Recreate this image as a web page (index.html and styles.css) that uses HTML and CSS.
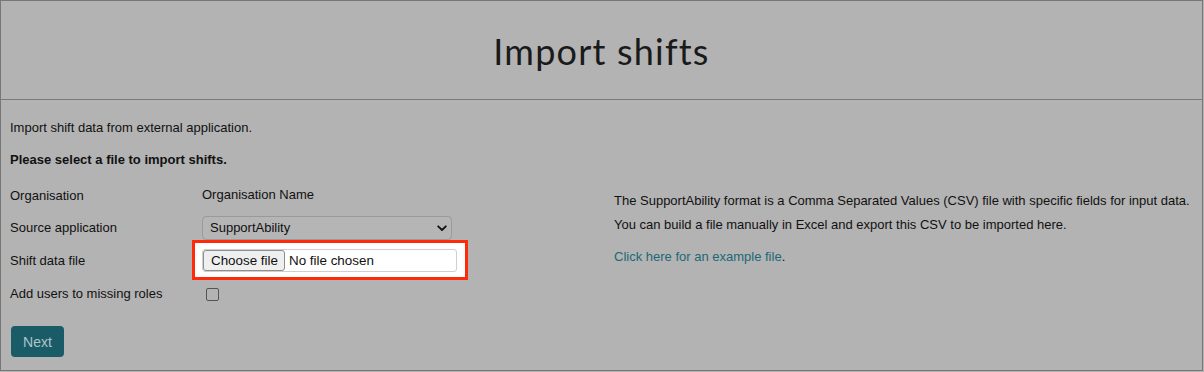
FILE: index.html
```html
<!DOCTYPE html>
<html>
<head>
<meta charset="utf-8">
<link rel="stylesheet" href="styles.css">
</head>
<body>
<div class="page">
  <header class="header"><h1 class="title">Import shifts</h1></header>
  <main class="content">
    <p class="intro">Import shift data from external application.</p>
    <p class="lead">Please select a file to import shifts.</p>
    <div class="columns">
      <div class="form">
        <div class="row">
          <span class="label">Organisation</span>
          <span class="value org">Organisation Name</span>
        </div>
        <div class="row">
          <span class="label">Source application</span>
          <div class="select">
            <span>SupportAbility</span>
            <svg class="chev" width="10" height="7" viewBox="0 0 10 7"><path d="M1.2 1.3 L5 5 L8.8 1.3" fill="none" stroke="#111" stroke-width="1.8" stroke-linecap="round" stroke-linejoin="round"/></svg>
          </div>
        </div>
        <div class="row">
          <span class="label">Shift data file</span>
          <div class="highlight">
            <div class="file">
              <span class="file-btn">Choose file</span>
              <span class="file-name">No file chosen</span>
            </div>
          </div>
        </div>
        <div class="row">
          <span class="label">Add users to missing roles</span>
          <span class="checkbox"></span>
        </div>
        <button class="next">Next</button>
      </div>
      <div class="info">
        <p class="info-line first">The SupportAbility format is a Comma Separated Values (CSV) file with specific fields for input data.</p>
        <p class="info-line">You can build a file manually in Excel and export this CSV to be imported here.</p>
        <p class="info-line link-line"><a class="link" href="#">Click here for an example file</a>.</p>
      </div>
    </div>
  </main>
</div>
</body>
</html>
```
FILE: styles.css
```css
html, body {
  margin: 0;
  padding: 0;
  background: #b3b3b3;
}
body {
  font-family: "Liberation Sans", Arial, sans-serif;
  font-size: 13px;
  line-height: 16px;
  color: #111;
}
.page {
  width: 1201px;
  height: 369px;
  border: 1px solid #777;
  background: #b3b3b3;
  overflow: hidden;
}
.header {
  height: 98px;
  border-bottom: 1px solid #7a7a7a;
  display: flex;
  align-items: center;
  justify-content: center;
}
.title {
  margin: 0;
  padding-top: 2px;
  font-family: Lato, "Open Sans", sans-serif;
  font-weight: 400;
  font-size: 36px;
  letter-spacing: 1.2px;
  color: #1a1a1a;
}
.content {
  padding: 20px 9px 0 9px;
}
.intro {
  margin: 0;
}
.lead {
  margin: 16px 0 0 0;
  font-weight: bold;
}
.columns {
  display: flex;
  margin-top: 11px;
}
.form {
  width: 604px;
  display: flex;
  flex-direction: column;
  align-items: flex-start;
}
.row {
  display: flex;
  align-items: center;
  height: 33px;
}
.row:nth-child(2) { height: 32px; }
.label {
  width: 192px;
}
.org {
  margin-top: -2px;
}
.select {
  box-sizing: border-box;
  width: 250px;
  height: 24px;
  border: 1px solid #9a9a9a;
  border-radius: 4px;
  background: #b5b5b5;
  display: flex;
  align-items: center;
  justify-content: space-between;
  padding: 0 4px 0 7px;
}
.chev {
  margin-top: 1px;
}
.highlight {
  margin: -9px 0 -8px -10px;
  border: 3px solid #ff2a0a;
  background: #fff;
  padding: 6px 8px 5px 7px;
  display: flex;
}
.file {
  box-sizing: border-box;
  width: 255px;
  height: 23px;
  border: 1px solid #cfcfcf;
  border-radius: 3px;
  display: flex;
  align-items: center;
  font-size: 13.4px;
  color: #111;
}
.file-btn {
  box-sizing: border-box;
  height: 21px;
  display: flex;
  align-items: center;
  padding: 0 6px 0 7px;
  background: #efefef;
  border: 1px solid #8e8e8e;
  border-radius: 3px;
}
.file-name {
  margin-left: 4px;
}
.checkbox {
  box-sizing: border-box;
  width: 13px;
  height: 13px;
  margin-left: 4px;
  margin-top: 2px;
  border: 1px solid #555;
  border-radius: 2px;
}
.next {
  margin-top: 16px;
  margin-left: 1px;
  width: 53px;
  height: 31px;
  border: none;
  border-radius: 4px;
  background: #195c68;
  color: #b0c4c8;
  font-family: "Liberation Sans", Arial, sans-serif;
  font-size: 14px;
  padding: 0;
}
.info {
  padding-left: 0;
}
.info-line {
  margin: 0;
}
.info-line.first {
  margin-top: 14px;
}
.info-line + .info-line {
  margin-top: 8px;
}
.info-line.link-line {
  margin-top: 16px;
}
.link {
  color: #1b6876;
  text-decoration: none;
}
```
